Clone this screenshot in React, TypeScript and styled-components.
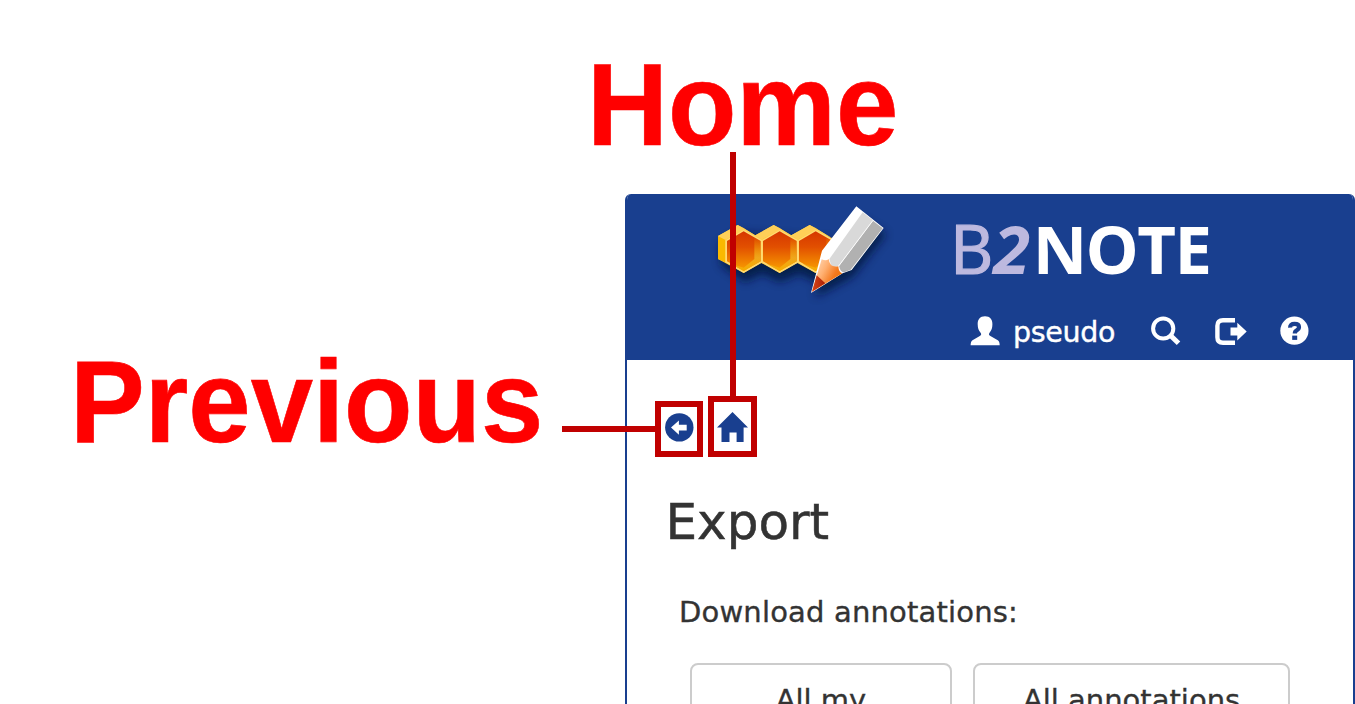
import React from "react";
import styled, { createGlobalStyle } from "styled-components";

const BLUE = "#193f8f";
const MARK = "#c00000";

const GlobalStyle = createGlobalStyle`
  * { box-sizing: border-box; }
  html, body { margin: 0; background: #fff; overflow: hidden; }
`;

const Page = styled.div`
  position: relative;
  width: 1355px;
  height: 704px;
  overflow: hidden;
  display: flex;
  justify-content: flex-end;
  align-items: flex-end;
  font-family: "DejaVu Sans", Verdana, sans-serif;
  color: #333;
`;

const Panel = styled.main`
  width: 730px;
  height: 510px;
  border: 2px solid ${BLUE};
  border-top: 0;
  border-bottom: 0;
  border-radius: 6px 6px 0 0;
  overflow: hidden;
`;

const Header = styled.header`
  height: 166px;
  background: ${BLUE};
  color: #fff;
`;

const Brand = styled.div`
  display: flex;
  height: 116px;
  padding-left: 73px;
`;

const LogoSlot = styled.div`
  margin-top: -4px;
`;

const Wordmark = styled.div`
  display: flex;
  margin-left: 50px;
  padding-top: 9px;
  font: 600 67px/90px "Open Sans", sans-serif;
`;

const Letters = styled.span<{ $tone?: string; $weight: number; $italic?: boolean; $gap?: number; $track?: number; $thicken?: number }>`
  color: ${(p) => p.$tone ?? "#fff"};
  font-weight: ${(p) => p.$weight};
  font-style: ${(p) => (p.$italic ? "italic" : "normal")};
  margin-left: ${(p) => p.$gap ?? 0}px;
  letter-spacing: ${(p) => p.$track ?? 0}px;
  -webkit-text-stroke: ${(p) => p.$thicken ?? 0}px ${(p) => p.$tone ?? "#fff"};
`;

const UserBar = styled.nav`
  display: flex;
  align-items: center;
  height: 42px;
  padding-left: 343px;
`;

const UserName = styled.span`
  width: 106px;
  margin: 4px 32px 0 13px;
  font-size: 28.5px;
  line-height: 34px;
  letter-spacing: -0.35px;
  -webkit-text-stroke: 0.4px #fff;
  white-space: nowrap;
`;

const Icon = styled.svg<{ $after?: number }>`
  display: block;
  flex: none;
  margin-right: ${(p) => p.$after ?? 0}px;
`;

const Crumbs = styled.nav`
  display: flex;
  gap: 22px;
  padding: 52px 0 0 37px;
`;

const Title = styled.h1`
  margin: 48px 0 0 38.5px;
  font-size: 50px;
  line-height: 64px;
  font-weight: 400;
  -webkit-text-stroke: 0.5px #333;
`;

const Label = styled.p`
  margin: 40px 0 0 52px;
  font-size: 29px;
  line-height: 36px;
  letter-spacing: 0.18px;
  -webkit-text-stroke: 0.35px #333;
`;

const Buttons = styled.div`
  display: flex;
  gap: 21px;
  margin: 33px 0 0 63px;
`;

const ExportButton = styled.button<{ $width: number }>`
  width: ${(p) => p.$width}px;
  height: 110px;
  padding: 18px 0 0;
  display: flex;
  justify-content: center;
  align-items: flex-start;
  border: 2px solid #ccc;
  border-radius: 8px;
  background: #fff;
  color: #333;
  font: 400 29px/34px "DejaVu Sans", Verdana, sans-serif;
  -webkit-text-stroke: 0.35px #333;
`;

const Callout = styled.div<{ $x: number; $y: number }>`
  position: absolute;
  left: ${(p) => p.$x}px;
  top: ${(p) => p.$y}px;
  color: #f00;
  font: 700 117.7px/130px "Liberation Sans", Arial, sans-serif;
  -webkit-text-stroke: 0.6px #f00;
  white-space: nowrap;
  transform: scaleX(0.952);
  transform-origin: left top;
`;

const Outline = styled.div<{ $x: number; $y: number; $w: number; $h: number }>`
  position: absolute;
  left: ${(p) => p.$x}px;
  top: ${(p) => p.$y}px;
  width: ${(p) => p.$w}px;
  height: ${(p) => p.$h}px;
  border: 6px solid ${MARK};
`;

const Leader = styled.div<{ $x: number; $y: number; $w: number; $h: number }>`
  position: absolute;
  left: ${(p) => p.$x}px;
  top: ${(p) => p.$y}px;
  width: ${(p) => p.$w}px;
  height: ${(p) => p.$h}px;
  background: ${MARK};
`;

const Cell = ({ x }: { x: number }) => (
  <g transform={`translate(${x} 0)`}>
    <path d="M54 138L113 105L131 114L187 150V217L131 249L54 207Z" fill="#ffc936" />
    <path d="M54 138L76 149V217L54 207Z" fill="#fab900" />
    <path d="M54 138L113 105L187 148L131 120L76 149Z" fill="#ffcf58" />
    <path d="M131 119L188 151V217L131 249L76 217V151Z" fill="#ffda72" />
    <path d="M131 124L182 153V214L131 243L81 214V153Z" fill="url(#honey)" />
    <path d="M163 143L182 153V214L131 243L92 221L131 233L163 207Z" fill="url(#floor)" />
  </g>
);

const Logo = () => (
  <Icon width="200" height="120" viewBox="0 0 600 360" overflow="visible">
    <defs>
      <linearGradient id="honey" x1="0" y1="0" x2="0" y2="1">
        <stop offset="0" stopColor="#d63700" />
        <stop offset=".4" stopColor="#e25000" />
        <stop offset="1" stopColor="#f9a000" />
      </linearGradient>
      <linearGradient id="floor" x1="0" y1="0" x2="0" y2="1">
        <stop offset="0" stopColor="#f0a000" stopOpacity=".1" />
        <stop offset=".6" stopColor="#efa61b" />
        <stop offset="1" stopColor="#f6ad00" />
      </linearGradient>
      <linearGradient id="wood" x1="0" y1="0" x2="1" y2=".6">
        <stop offset="0" stopColor="#ffe5ce" />
        <stop offset=".45" stopColor="#ffb071" />
        <stop offset=".75" stopColor="#f47a20" />
        <stop offset="1" stopColor="#ef7000" />
      </linearGradient>
      <linearGradient id="lead" x1="0" y1="0" x2="1" y2="0">
        <stop offset="0" stopColor="#d84418" />
        <stop offset="1" stopColor="#a91f06" />
      </linearGradient>
      <filter id="shade" x="-20%" y="-40%" width="150%" height="200%">
        <feGaussianBlur stdDeviation="15" />
      </filter>
    </defs>
    <g fill="#06133a" opacity=".8" filter="url(#shade)">
      <path d="M60 160L120 130L400 150V250L345 275L300 250L240 276L187 250L135 276L64 225Z" />
      <path d="M380 205L478 85L558 132L458 260L345 322Z" />
    </g>
    <Cell x={216} />
    <Cell x={108} />
    <Cell x={0} />
    <path d="M469 49L551 114L455 240L428 250L333 309L366 182Z" fill="#fff" />
    <path d="M488 67L519 91L416 227Q404 234 393 225L388 207Z" fill="#d9d9d9" />
    <path d="M519 92L548 115L452 239L433 247Q421 247 417 228Z" fill="#b1b1b1" />
    <path d="M365 208Q379 214 386 207Q389 234 415 229Q416 247 427 250L336 305Z" fill="url(#wood)" />
    <path d="M350 256L376 280L336 305Z" fill="url(#lead)" />
    <path d="M519 91L416 228" fill="none" stroke="#fff" strokeWidth="2.5" />
  </Icon>
);

export default function App() {
  return (
    <Page>
      <GlobalStyle />
      <Panel>
        <Header>
          <Brand>
            <LogoSlot>
              <Logo />
            </LogoSlot>
            <Wordmark>
              <Letters $tone="#bdb9df" $weight={400} $thicken={1.2}>B</Letters>
              <Letters $tone="#bdb9df" $weight={700} $italic>2</Letters>
              <Letters $weight={700} $gap={2.5} $track={-1.6}>NOTE</Letters>
            </Wordmark>
          </Brand>
          <UserBar>
            <Icon width="30" height="30" viewBox="0 0 30 30" fill="#fff">
              <path d="M15 0.3C20 .3 22.6 3.6 22.4 8.5C22.3 12 21.6 14.2 19.7 16.4C18.7 17.6 18.6 19 20.4 20L27.8 24.2Q29.6 25.3 29.7 29.3H.6Q.7 25.3 2.5 24.2L9.8 20C11.5 19 11.5 17.6 10.4 16.4C8.5 14.2 7.8 12 7.7 8.5C7.5 3.6 10 .3 15 .3Z" />
            </Icon>
            <UserName>pseudo</UserName>
            <Icon width="30" height="30" viewBox="0 0 30 30" $after={34} fill="none" stroke="#fff">
              <circle cx="12.2" cy="12.5" r="10.1" strokeWidth="4" />
              <path d="M19.5 19.5L27.5 27.3" strokeWidth="5" />
            </Icon>
            <Icon width="32" height="30" viewBox="0 0 32 30" $after={33}>
              <path d="M20 4.3H8Q2.4 4.3 2.4 9.8V21.2Q2.4 26.7 8 26.7H20" fill="none" stroke="#fff" strokeWidth="4.4" />
              <path d="M15.5 11.6H22.3V6.7L31.7 15.6L22.3 24.5V19.6H15.5Z" fill="#fff" />
            </Icon>
            <Icon width="30" height="30" viewBox="0 0 30 30">
              <circle cx="14.4" cy="14.7" r="14.1" fill="#fff" />
              <path d="M10.1 11.6Q10 7.9 14.5 7.9Q19 7.9 19 11.1Q19 13.1 16.7 14.3Q14.8 15.3 14.8 17.5" fill="none" stroke={BLUE} strokeWidth="4.2" />
              <path d="M12.2 19.6H17.2V23.9H12.2Z" fill={BLUE} />
            </Icon>
          </UserBar>
        </Header>
        <Crumbs>
          <Icon width="30" height="30" viewBox="0 0 30 30">
            <circle cx="15.3" cy="15.4" r="14.2" fill={BLUE} />
            <path d="M7 15.6L14.9 8.4V12.7H22.7V18.4H14.9V22.8Z" fill="#fff" />
          </Icon>
          <Icon width="32" height="30" viewBox="0 0 32 30">
            <path d="M16.5 0L32 15.5H27.6V30H20.6V20.5H13.5V30H5.5V15.5H1Z" fill={BLUE} />
          </Icon>
        </Crumbs>
        <Title>Export</Title>
        <Label>Download annotations:</Label>
        <Buttons>
          <ExportButton $width={262}>All my</ExportButton>
          <ExportButton $width={317}>All annotations</ExportButton>
        </Buttons>
      </Panel>
      <Callout $x={587} $y={39}>Home</Callout>
      <Callout $x={69.6} $y={336}>Previous</Callout>
      <Leader $x={729.5} $y={152} $w={6} $h={244} />
      <Leader $x={562} $y={426} $w={93} $h={6} />
      <Outline $x={655} $y={401} $w={48} $h={56} />
      <Outline $x={708} $y={396} $w={49} $h={61} />
    </Page>
  );
}
